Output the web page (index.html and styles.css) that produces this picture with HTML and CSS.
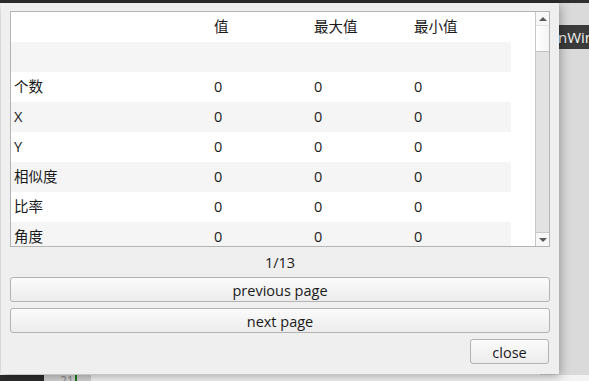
FILE: index.html
```html
<!DOCTYPE html>
<html lang="en">

<head>
    <meta charset="UTF-8">
    <meta name="viewport" content="width=device-width, initial-scale=1.0">
    <title>Statistics</title>
    <link rel="stylesheet" href="styles.css">
</head>

<body>
    <div class="desktop">
        <div class="top-strip"></div>
        <div class="back-window">
            <div class="back-title">nWindow</div>
        </div>
        <div class="editor-strip">
            <div class="editor-dark"></div>
            <div class="editor-gutter"><span class="line-no">21</span><span class="marker"></span></div>
        </div>

        <div class="dialog">
            <div class="table-frame">
                <div class="table-view">
                    <div class="row">
                        <div class="cell first"></div>
                        <div class="cell">值</div>
                        <div class="cell">最大值</div>
                        <div class="cell">最小值</div>
                    </div>
                    <div class="row alt">
                        <div class="cell first"></div>
                        <div class="cell"></div>
                        <div class="cell"></div>
                        <div class="cell"></div>
                    </div>
                    <div class="row">
                        <div class="cell first">个数</div>
                        <div class="cell">0</div>
                        <div class="cell">0</div>
                        <div class="cell">0</div>
                    </div>
                    <div class="row alt">
                        <div class="cell first">X</div>
                        <div class="cell">0</div>
                        <div class="cell">0</div>
                        <div class="cell">0</div>
                    </div>
                    <div class="row">
                        <div class="cell first">Y</div>
                        <div class="cell">0</div>
                        <div class="cell">0</div>
                        <div class="cell">0</div>
                    </div>
                    <div class="row alt">
                        <div class="cell first">相似度</div>
                        <div class="cell">0</div>
                        <div class="cell">0</div>
                        <div class="cell">0</div>
                    </div>
                    <div class="row">
                        <div class="cell first">比率</div>
                        <div class="cell">0</div>
                        <div class="cell">0</div>
                        <div class="cell">0</div>
                    </div>
                    <div class="row alt">
                        <div class="cell first">角度</div>
                        <div class="cell">0</div>
                        <div class="cell">0</div>
                        <div class="cell">0</div>
                    </div>
                </div>
                <div class="scrollbar">
                    <div class="scroll-btn"><span class="arrow up"></span></div>
                    <div class="scroll-handle"></div>
                    <div class="scroll-trough"></div>
                    <div class="scroll-btn"><span class="arrow down"></span></div>
                </div>
            </div>

            <div class="page-label">1/13</div>
            <button class="btn wide">previous page</button>
            <button class="btn wide">next page</button>
            <div class="footer">
                <button class="btn close">close</button>
            </div>
        </div>
    </div>
</body>

</html>
```

FILE: styles.css
```css
* {
    box-sizing: border-box;
}

body {
    margin: 0;
    width: 589px;
    height: 381px;
    overflow: hidden;
    background: #fafafa;
    font-family: "Open Sans", "Noto Sans CJK SC", sans-serif;
    font-size: 14.5px;
    color: #1a1a1a;
}

.desktop {
    position: relative;
    width: 589px;
    height: 381px;
}

/* background windows */
.top-strip {
    position: absolute;
    left: 0;
    top: 0;
    width: 589px;
    height: 3px;
    background: #2e2e2e;
}

.back-window {
    position: absolute;
    left: 540px;
    top: 3px;
    width: 49px;
    height: 372px;
    background: #dadada;
    padding-top: 22px;
}

.back-title {
    height: 24px;
    background: #3b3b3b;
    color: #f2f2f2;
    font-size: 15px;
    line-height: 24px;
    padding-left: 18px;
    white-space: nowrap;
    overflow: hidden;
}

.editor-strip {
    position: absolute;
    left: 0;
    top: 375px;
    width: 589px;
    height: 6px;
    display: flex;
    background: #f3f3f3;
}

.editor-dark {
    width: 44px;
    background: #2b2b2b;
}

.editor-gutter {
    width: 47px;
    background: #d2d2d2;
    position: relative;
    overflow: hidden;
}

.line-no {
    position: absolute;
    left: 16px;
    top: -1px;
    font-size: 12px;
    line-height: 14px;
    color: #8a8a8a;
}

.marker {
    position: absolute;
    left: 31px;
    top: 0;
    width: 2px;
    height: 6px;
    background: #1d7a1d;
}

/* dialog */
.dialog {
    position: absolute;
    left: 1px;
    top: 3px;
    width: 558px;
    height: 371px;
    background: #efefef;
    padding: 8px 9px 10px 9px;
    display: flex;
    flex-direction: column;
    box-shadow: 1px 2px 10px rgba(0, 0, 0, 0.35);
}

.table-frame {
    height: 237px;
    border: 1px solid #b4b4b4;
    background: #fff;
    display: flex;
    overflow: hidden;
}

.table-view {
    flex: 1;
    overflow: hidden;
}

.row {
    display: flex;
    width: 500px;
    height: 30px;
    background: #fff;
}

.row.alt {
    background: #f5f5f5;
}

.cell {
    width: 100px;
    padding-left: 3px;
    line-height: 30px;
    white-space: nowrap;
}

.cell.first {
    width: 200px;
    padding-left: 3px;
}

.scrollbar {
    width: 14px;
    border-left: 1px solid #c6c6c6;
    display: flex;
    flex-direction: column;
    background: #e3e3e3;
}

.scroll-btn {
    height: 13px;
    background: #f7f7f7;
    display: flex;
    align-items: center;
    justify-content: center;
}

.scroll-handle {
    height: 27px;
    background: linear-gradient(to right, #ffffff, #f4f4f4);
    border-top: 1px solid #e2e2e2;
    border-bottom: 1px solid #c3c3c3;
}

.scroll-trough {
    flex: 1;
    background: #e2e2e2;
    border-bottom: 1px solid #c8c8c8;
}

.arrow {
    width: 0;
    height: 0;
    border-left: 4px solid transparent;
    border-right: 4px solid transparent;
}

.arrow.up {
    border-bottom: 4px solid #5a5a5a;
}

.arrow.down {
    border-top: 4px solid #5a5a5a;
}

.page-label {
    height: 30px;
    padding-top: 2px;
    line-height: 28px;
    text-align: center;
}

.btn {
    font-family: inherit;
    font-size: 14.5px;
    color: #1a1a1a;
    height: 25px;
    padding: 1px 0 0 0;
    border: 1px solid #b3b3b3;
    border-radius: 3px;
    background: linear-gradient(to bottom, #fbfbfb, #ececec);
}

.btn.wide {
    width: 100%;
    margin-bottom: 6px;
}

.footer {
    display: flex;
    justify-content: flex-end;
    padding-right: 1px;
}

.btn.close {
    width: 79px;
}
```
